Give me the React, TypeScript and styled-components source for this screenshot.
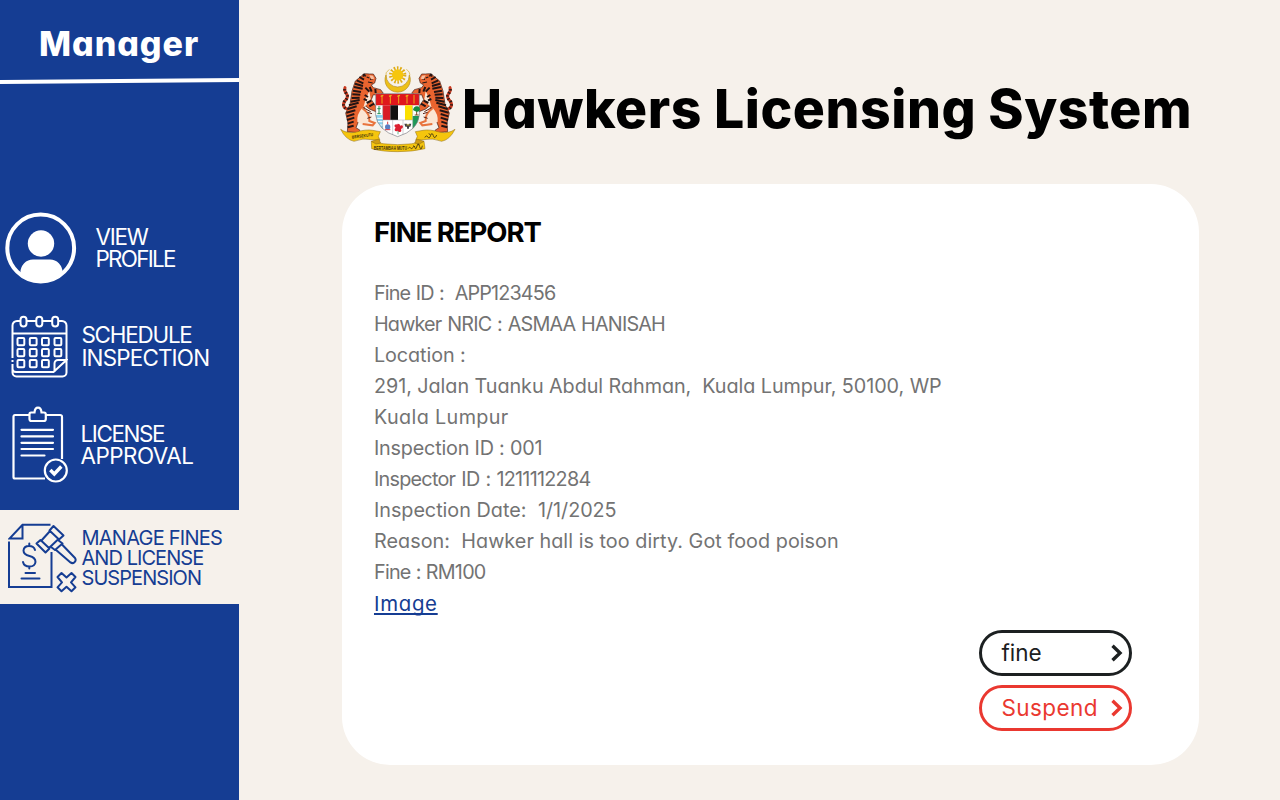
import React from 'react';
import styled, { createGlobalStyle } from 'styled-components';

const blue = '#153d93';
const cream = '#f6f1eb';

const GlobalStyle = createGlobalStyle`
  *, *::before, *::after { box-sizing: border-box; }
  body {
    margin: 0;
    background: ${cream};
    font-family: Inter, "Liberation Sans", sans-serif;
    font-feature-settings: 'cv11' 1;
  }
`;

const Page = styled.div`
  display: flex;
  width: 1280px;
  height: 800px;
  overflow: hidden;
  background: ${cream};
`;

const Sidebar = styled.aside`
  flex: none;
  display: flex;
  flex-direction: column;
  width: 238.6px;
  height: 800px;
  background: ${blue};
  color: #fff;
`;

const Role = styled.h2`
  margin: 0;
  padding: 0 0 0 39px;
  height: 79px;
  line-height: 88px;
  font-size: 34px;
  font-weight: 800;
  letter-spacing: 0.95px;
  white-space: nowrap;
`;

const Divider = styled.div`
  height: 4px;
  background: #fff;
  transform: skewY(-0.48deg);
`;

const Nav = styled.nav`
  display: flex;
  flex-direction: column;
  padding-top: 116px;
`;

const NavItem = styled.a<{ $active?: boolean; $left: number }>`
  display: flex;
  align-items: center;
  height: ${p => (p.$active ? 94 : 98.5)}px;
  margin-top: ${p => (p.$active ? 15.5 : 0)}px;
  padding-top: ${p => (p.$active ? 2 : 0)}px;
  padding-left: ${p => p.$left}px;
  background: ${p => (p.$active ? cream : 'transparent')};
  color: ${p => (p.$active ? blue : '#fff')};
  font-size: ${p => (p.$active ? 20 : 22.4)}px;
  line-height: ${p => (p.$active ? 20 : 22.4)}px;
  text-decoration: none;
`;

const NavText = styled.span<{ $gap: number }>`
  display: flex;
  flex-direction: column;
  margin-left: ${p => p.$gap}px;
`;

const Line = styled.span<{ $track: number; $space?: number }>`
  letter-spacing: ${p => p.$track}px;
  word-spacing: ${p => p.$space ?? 0}px;
  white-space: pre;
`;

const Main = styled.main`
  flex: 1;
  display: flex;
  flex-direction: column;
  padding: 62px 0 0 101px;
`;

const Header = styled.header`
  display: flex;
  align-items: center;
  height: 93px;
`;

const Title = styled.h1`
  margin: 0 0 0 4.5px;
  font-size: 53.5px;
  line-height: 60px;
  font-weight: 800;
  letter-spacing: 0.52px;
  color: #000;
  white-space: nowrap;
`;

const Card = styled.section`
  display: flex;
  flex-direction: column;
  width: 857.5px;
  height: 581px;
  margin: 29px 0 0 2.4px;
  padding: 33px 67px 0 32px;
  border-radius: 48px;
  background: #fff;
`;

const CardTitle = styled.h2`
  margin: 0 0 30.5px;
  font-size: 27.5px;
  line-height: 30px;
  font-weight: 700;
  letter-spacing: -1.04px;
  color: #000;
`;

const Report = styled.div`
  display: flex;
  flex-direction: column;
  align-items: flex-start;
  font-size: 19.8px;
  line-height: 31px;
  color: #737373;
`;

const ImageLink = styled.a`
  color: ${blue};
  font-size: 20.4px;
  letter-spacing: 0.7px;
  text-decoration: underline;
  text-decoration-thickness: 1.6px;
  text-underline-offset: 2px;
  text-decoration-skip-ink: none;
`;

const Actions = styled.div`
  display: flex;
  flex-direction: column;
  align-items: flex-end;
  gap: 9px;
  margin-top: 11px;
`;

const PillButton = styled.button<{ $color: string; $track: number }>`
  display: flex;
  align-items: center;
  justify-content: space-between;
  width: 153.5px;
  height: 46px;
  padding: 0 5.5px 0 19.5px;
  border: 3.4px solid ${p => p.$color};
  border-radius: 23px;
  background: #fff;
  color: ${p => p.$color};
  font: 400 22.5px Inter, sans-serif;
  font-feature-settings: 'cv11' 1;
  letter-spacing: ${p => p.$track}px;
`;

const ProfileIcon = () => (
  <svg width="72" height="72" viewBox="0 0 72 72">
    <defs>
      <clipPath id="disc"><circle cx="36" cy="36" r="34.5" /></clipPath>
    </defs>
    <circle cx="35.7" cy="36" r="33.4" fill="none" stroke="#fff" strokeWidth="4" />
    <circle cx="36" cy="31.5" r="13.2" fill="#fff" />
    <path clipPath="url(#disc)" fill="#fff" d="M15.5 72V60a12.5 12.5 0 0 1 12.5-12.5h17A12.5 12.5 0 0 1 57.5 60v12z" />
  </svg>
);

const CalendarIcon = () => (
  <svg width="57" height="63" viewBox="0 0 57 63" fill="none" stroke="#fff" strokeWidth="2">
    <path d="M9.5 6H6a4.5 4.5 0 0 0-4.5 4.5V43M15.5 6H25M31.5 6H41M47.5 6H51a4.5 4.5 0 0 1 4.5 4.5V57.5a4 4 0 0 1-4 4H5.5a4 4 0 0 1-4-4V49M1.5 45v2M1.5 18.5h54M1.5 54q0 3 3.5 3H42.5L55.5 45H47a3.5 3.5 0 0 0-3.5 3.5v8.5" />
    {[9.5, 25.3, 41.2].map(x => <rect key={x} x={x} y="1.7" width="6" height="9.8" rx="3" />)}
    {[23, 34, 45].flatMap((y, r) =>
      [6.5, 18.8, 31, 43.5].slice(0, r === 2 ? 3 : 4).map(x => (
        <rect key={`${x}-${y}`} x={x} y={y} width="6.8" height="7.3" rx="1" />
      )),
    )}
  </svg>
);

const ClipboardIcon = () => (
  <svg width="57" height="78" viewBox="0 0 57 78" fill="none" stroke="#fff" strokeWidth="2.2">
    <path d="M17.5 9H2.8A1.5 1.5 0 0 0 1.5 10.5V71A1.5 1.5 0 0 0 3 72.5H33M33.5 9H48A1.8 1.8 0 0 1 50 11V53" />
    <path d="M19 6.5h3.5q.4-4.8 3.5-4.8t3.5 4.8H32a1.8 1.8 0 0 1 1.8 1.8V13a2 2 0 0 1-2 2H19.5a2 2 0 0 1-2-2V8a1.5 1.5 0 0 1 1.5-1.5z" />
    <path strokeLinecap="round" d="M9.5 23.8H41M9.5 30.4H41M9.5 36.8H41M9.5 43H41M9.5 49.5H32.5" />
    <circle cx="43.8" cy="64.5" r="11" />
    <path strokeWidth="3.4" d="M38.3 64l4 4 7-7.5" />
  </svg>
);

const FinesIcon = () => (
  <svg width="69" height="70" viewBox="0 0 69 70" fill="none" stroke={blue} strokeWidth="2">
    <path d="M42.5 1.8H14.5L1.5 15.5H14.5V1.8M1 18.5V64H43.5V29" />
    <path strokeLinecap="round" d="M27 27q-1-4-6-4t-5.500 4.500q0 4 6 5.500t6 6q-.5 4.500-6 4.500t-6.500-4.500M21.300 20.500v2.500M21.300 43.500v2M17.500 50h9.500M13.500 55.500h18" />
    <path strokeLinejoin="round" d="M42.5 7.5L33 18M51 15.5L40.5 25.5M45.5 3L55.5 12.5 51 16.5 41.5 7.5zM32.5 17L41.5 25.5 37.5 29.5 28.5 20.5z" />
    <path strokeLinejoin="round" d="M50 17l4.5 3.5-7.5 6.5-4-3M53.5 21l13.5 14q1.5 2.5-.5 4.2t-4 .2L47.5 26.5" />
    <path strokeLinejoin="round" d="M53.5 50l5 4.5 5-4.5 4 4-4.5 5.3 4.5 5-4 4-5-4.5-5 4.5-4-4 4.5-5-4.5-5.3z" />
  </svg>
);

const Tiger = () => (
  <g>
    <path d="M66 160C48 168 35 154 43 140C52 130 56 124 48 114Q42 106 45 98" fill="none" stroke="#c93a20" strokeWidth="9" strokeLinecap="round" />
    <path d="M66 160C48 168 35 154 43 140C52 130 56 124 48 114Q42 106 45 98" fill="none" stroke="#2a1a17" strokeWidth="9" strokeDasharray="4 6" />
    <path d="M98 60Q108 54 118 57L130 57L138 70L134 84L124 90L130 98L152 104L160 115L146 121L130 119L124 134L140 158L138 170L118 162L106 152L98 166L92 178L86 198L78 218L90 226L84 233L52 230L54 204L47 174L60 148L66 108L76 78Z" fill="#e9642f" stroke="#43201a" strokeWidth="2" />
    <path d="M118 108Q104 134 100 158Q114 148 122 132ZM96 160Q80 178 82 200L96 208Q118 212 114 190Q108 170 96 160Z" fill="#fbe5d3" />
    <path d="M98 160Q120 176 118 198L134 204L128 211L98 207" fill="none" stroke="#e8743e" strokeWidth="6" />
    <path d="M100 158l22 12M112 172l14 4M112 190l12-4" stroke="#5a2318" strokeWidth="3" />
    <path d="M88 66l14 8M80 76l20 9M75 86l24 7M72 96l26 5M69 107l24 4M67 118l24 1M65 129l24-1M62 140l27-5M57 151l29-8M53 162l27-8M49 173l27-7M50 184l23-7M51 195l22-7M53 206l18-6M53 217l18-5M106 98l12 12M119 96l6 14M136 102l1 12M110 144l14-7M118 154l14-8M104 120l10 6M101 132l10 4" stroke="#231414" strokeWidth="6" fill="none" />
    <path d="M110 66l8 3M120 73l9-2M114 81l14 3M100 58l8 6" stroke="#231817" strokeWidth="3.5" />
    <path d="M118 61l11 1 4 9-9 2z" fill="#f8bfa0" />
    <path d="M98 57l8-2-1 9-7 2z" fill="#2a1614" />
  </g>
);

const Crest = () => (
  <svg width="118" height="93" viewBox="30 21 354 279">
    <path d="M168 60A38 37 0 1 0 238 60A34 35 0 0 1 168 60Z" fill="#edc018" stroke="#b58b1d" strokeWidth="2" />
    <path d="M168 66Q164 52 178 43M238 66Q243 52 229 43" fill="none" stroke="#d3ab2b" strokeWidth="2" />
    <circle cx="203" cy="60" r="19" fill="none" stroke="#dfac16" strokeWidth="14" strokeDasharray="4.2 4.327" />
    <circle cx="203" cy="60" r="17" fill="#f6c60e" />
    <Tiger />
    <g transform="translate(405 0) scale(-1 1)"><Tiger /></g>
    <defs>
      <clipPath id="shield"><path d="M137 116H268V180Q264 226 203 245Q142 226 137 180Z" /></clipPath>
    </defs>
    <g clipPath="url(#shield)">
      <path d="M130 110H275V250H130Z" fill="#fff" />
      <path d="M130 110H275V151H130Z" fill="#df171c" />
      <path d="M158 151h23v44h-23z" fill="#d91b26" />
      <path d="M181 151h23v44h-23z" fill="#111" />
      <path d="M225 151h23v44h-23z" fill="#fbe000" />
      <path d="M137 180h22v50h-22z" fill="#8bd0ee" />
      <path d="M137 190h22M137 200h22M137 210h22" stroke="#fff" strokeWidth="3" />
      <path d="M248 183h22v40h-22z" fill="#1e9858" />
      <path d="M158 195H248M188 195V240M219 195V240M158 151V230M248 151V225" stroke="#a5a5aa" strokeWidth="1.5" />
    </g>
    <path d="M137 116H268V180Q264 226 203 245Q142 226 137 180Z" fill="none" stroke="#7a7a80" strokeWidth="2" />
    <path d="M156 120v26M181 120v26M206 120v26M231 120v26M252 120v26" stroke="#ecab1b" strokeWidth="3" />
    <path d="M152 124l8-3M177 124l8-3M202 124l8-3M227 124l8-3" stroke="#ecab1b" strokeWidth="4" />
    <path d="M147 160v16M142 161h10M144 156h7M142 176h10" stroke="#238e50" strokeWidth="3" />
    <path d="M260 163v17M254 180h12" stroke="#7b4c24" strokeWidth="3" />
    <path d="M249 165q2-10 11-11t10 10q-4 8-10 6t-11-5z" fill="#168d43" />
    <circle cx="173" cy="216" r="8" fill="#5a7ec2" />
    <path d="M173 200v8M165 224h16" stroke="#d73c47" strokeWidth="3" />
    <path d="M204 206q6 0 7 6q8-3 8 4q-1 5-6 6q3 8-3 9q-5 1-7-4q-6 4-9-1q-1-5 3-8q-6-4-3-8q4-4 8-1q-1-3 2-3z" fill="#dc1f30" />
    <path d="M204 228v10" stroke="#279250" strokeWidth="2" />
    <path d="M223 206h8l3 5 3-5h7l-3 9h-4v6h-6v-6h-5z" fill="#404046" />
    <path d="M229 210h10" stroke="#e9be20" strokeWidth="2" />
    <g fill="#f5c50d" stroke="#8c6a14" strokeWidth="1.5">
      <path d="M32 223Q50 236 76 232Q108 222 128 226L151 230L145 244L150 256L126 254Q98 248 72 259Q47 254 32 223Z" />
      <path d="M375 223Q357 236 331 232Q299 222 279 226L256 230L262 244L257 256L281 254Q309 248 335 259Q360 254 375 223Z" />
      <path d="M124 259Q160 269 203 269T282 259L285 281Q250 290 203 290T125 281Z" />
      <path d="M124 259L146 252L152 264L138 267ZM282 259L260 252L254 264L268 267Z" fill="#d19d12" />
    </g>
    <g fontFamily="Liberation Sans, sans-serif" fontWeight="700" fill="#3d300d">
      <text x="131" y="284" fontSize="14" textLength="100" lengthAdjust="spacingAndGlyphs">BERTAMBAH MUTU</text>
      <text x="66" y="251" fontSize="13" textLength="64" lengthAdjust="spacingAndGlyphs" transform="rotate(-7 66 251)">BERSEKUTU</text>
    </g>
    <path d="M234 281q5-8 8-2t7-2 6 1 6-5 8 2 8-3M284 247q6-8 10-1t8-5 8 1 10-2M250 272l4 3M264 268l3 2M296 236l5 3" fill="none" stroke="#3d300d" strokeWidth="2.5" />
  </svg>
);

const Chevron = () => (
  <svg width="14" height="18" viewBox="0 0 14 18" fill="none" stroke="currentColor" strokeWidth="3.4">
    <path d="M2.5 1.8L10 9L2.5 16.2" />
  </svg>
);

const reportLines: [string, number, number][] = [
  ['Fine ID :  APP123456', -0.85, 0.7],
  ['Hawker NRIC : ASMAA HANISAH', -0.82, 1],
  ['Location :', -0.08, 0],
  ['291, Jalan Tuanku Abdul Rahman,  Kuala Lumpur, 50100, WP', -0.06, 0],
  ['Kuala Lumpur', 0.36, 0],
  ['Inspection ID : 001', -0.2, 0],
  ['Inspector ID : 1211112284', -0.74, 1.2],
  ['Inspection Date:  1/1/2025', -0.04, 0.3],
  ['Reason:  Hawker hall is too dirty. Got food poison', 0.04, 0],
  ['Fine : RM100', -0.76, 0.3],
];

export default function App() {
  return (
    <>
      <GlobalStyle />
      <Page>
        <Sidebar>
          <Role>Manager</Role>
          <Divider />
          <Nav>
            <NavItem $left={5}>
              <ProfileIcon />
              <NavText $gap={18.5}>
                <Line $track={-1.2}>VIEW</Line>
                <Line $track={-1.7}>PROFILE</Line>
              </NavText>
            </NavItem>
            <NavItem $left={11}>
              <CalendarIcon />
              <NavText $gap={13.4}>
                <Line $track={-1.19}>SCHEDULE</Line>
                <Line $track={-0.8}>INSPECTION</Line>
              </NavText>
            </NavItem>
            <NavItem $left={11.5}>
              <ClipboardIcon />
              <NavText $gap={12}>
                <Line $track={-1.37}>LICENSE</Line>
                <Line $track={-0.5}>APPROVAL</Line>
              </NavText>
            </NavItem>
            <NavItem $left={7.5} $active>
              <FinesIcon />
              <NavText $gap={5}>
                <Line $track={-0.76}>MANAGE FINES</Line>
                <Line $track={-0.95}>AND LICENSE</Line>
                <Line $track={-0.94}>SUSPENSION</Line>
              </NavText>
            </NavItem>
          </Nav>
        </Sidebar>
        <Main>
          <Header>
            <Crest />
            <Title>Hawkers Licensing System</Title>
          </Header>
          <Card>
            <CardTitle>FINE REPORT</CardTitle>
            <Report>
              {reportLines.map(([text, track, space]) => (
                <Line key={text} $track={track} $space={space}>{text}</Line>
              ))}
              <ImageLink>Image</ImageLink>
            </Report>
            <Actions>
              <PillButton $color="#1c2021" $track={0}>
                fine
                <Chevron />
              </PillButton>
              <PillButton $color="#ea3830" $track={0.4}>
                Suspend
                <Chevron />
              </PillButton>
            </Actions>
          </Card>
        </Main>
      </Page>
    </>
  );
}
